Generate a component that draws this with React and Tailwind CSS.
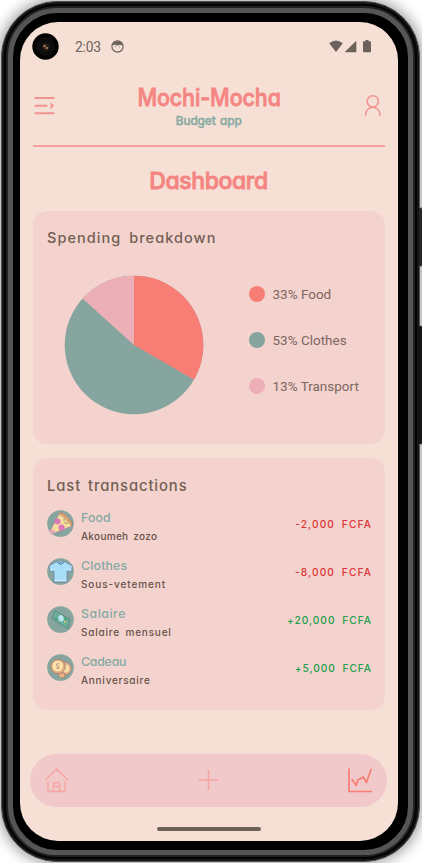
import React from "react";

const hand = "font-[Inter,sans-serif] [font-feature-settings:'cv11'] whitespace-nowrap";

function Camera() {
  return (
    <svg className="size-[27px]" viewBox="0 0 27 27">
      <circle cx="13.5" cy="13.5" r="13.2" fill="#020202" />
      <circle cx="13.5" cy="13.5" r="9.5" fill="#0d0d0d" />
      <circle cx="13.8" cy="13.8" r="3.6" fill="#2b1d17" />
      <circle cx="12.6" cy="13" r="1.3" fill="#a5745a" />
      <circle cx="14.8" cy="15" r="1" fill="#c69a78" />
    </svg>
  );
}

function StatusBar() {
  return (
    <div className="flex h-[52px] w-full pl-3 pt-[11px] text-[#6c615b]">
      <Camera />
      <span className="ml-4 mt-[5px] w-[28px] whitespace-nowrap font-[Roboto,sans-serif] text-[13.8px] leading-[18px] tracking-[-0.2px]">2:03</span>
      <svg className="ml-[8px] mt-[7px] size-[13px]" viewBox="0 0 13 13" fill="none" stroke="currentColor">
        <circle cx="6.5" cy="6.5" r="5.6" strokeWidth="1.2" />
        <path d="M1.8 4.9C2.6 .4 10.4 .4 11.2 4.9L8.8 4.5 6.5 5.3 4 4.5Z" fill="currentColor" strokeWidth=".6" />
        <path d="M4.1 6.9h.7M8.2 6.9h.7" strokeWidth="1" />
      </svg>
      <svg className="ml-[205px] mt-[7px] h-[13px] w-[43px]" viewBox="0 0 43 13" fill="currentColor">
        <path d="M.2 3.3Q7-2.4 13.8 3.3L7 12Z" />
        <path d="M16 12.2V11.8L27.3.7V12.2Z" />
        <path d="M36.5 0h3v1.2h1.6q.9 0 .9.9v9.2q0 .9-.9.9h-6.2q-.9 0-.9-.9V2.1q0-.9.9-.9h1.6Z" />
      </svg>
    </div>
  );
}

function Header() {
  return (
    <header className="mx-[13.4px] flex h-[72.5px] justify-between border-b-2 border-[#f5a09c]">
      <svg className="mt-[22px] h-[20px] w-[23px]" viewBox="0 0 23 20" fill="none" stroke="#f19490" strokeWidth="1.9" strokeLinecap="round">
        <path d="M2.4 2H20.6M2.4 9.7H13.6M2.4 17.3H20.6" />
        <path d="M18 7L20.9 9.7L18 12.6Z" fill="#f19490" strokeWidth=".6" />
      </svg>
      <div className={`${hand} flex w-[170px] flex-col items-center pr-[3px]`}>
        <h1 className="mt-[10px] scale-x-[0.895] text-[24px] font-medium leading-[28px] tracking-[-0.1px] text-[#f58583] [-webkit-text-stroke:0.8px_#f58583]">Mochi-Mocha</h1>
        <p className="mt-[1px] text-[11.8px] font-medium leading-[16px] tracking-[-0.1px] text-[#86aaa2] [-webkit-text-stroke:0.4px_#86aaa2] [word-spacing:1.5px]">Budget app</p>
      </div>
      <svg className="mr-[3.5px] mt-[20px] h-[23px] w-[17px]" viewBox="0 0 17 23" fill="none" stroke="#f19490" strokeWidth="1.5" strokeLinecap="round">
        <circle cx="8.8" cy="7.3" r="5.6" />
        <path d="M1.6 21.2C1.6 10.5 16 10.5 16 21.2" />
      </svg>
    </header>
  );
}

const legend = [
  ["bg-[#f77d75]", "33% Food"],
  ["bg-[#86a59e]", "53% Clothes"],
  ["bg-[#edafb7]", "13% Transport"],
];

function Breakdown() {
  return (
    <section className="mx-[13.4px] h-[233.5px] rounded-[14px] bg-[#f4d3cf] pl-[13.6px] pt-[16px]">
      <h3 className={`${hand} text-[14.5px] font-medium leading-[22px] tracking-[1.05px] text-[#725f53] [word-spacing:3px]`}>Spending breakdown</h3>
      <div className="flex">
        <svg className="ml-[17px] mt-[26px] size-[140px]" viewBox="-70 -70 140 140">
          <circle r="69.3" fill="#86a59e" />
          <path d="M0 0V-69.3A69.3 69.3 0 0 1 60 34.65Z" fill="#f77d75" />
          <path d="M0 0L-51.5-46.4A69.3 69.3 0 0 1 0-69.3Z" fill="#edafb7" />
        </svg>
        <div className="ml-[45.5px] mt-[37.5px] flex flex-col gap-[30px]">
          {legend.map(([color, label]) => (
            <div key={label} className="flex h-4 items-center gap-[7.5px]">
              <span className={`size-[15.5px] rounded-full ${color}`} />
              <span className="whitespace-nowrap font-[Roboto,sans-serif] text-[13.5px] leading-4 text-[#7c665f]">{label}</span>
            </div>
          ))}
        </div>
      </div>
    </section>
  );
}

function Pizza() {
  return (
    <g>
      <path d="M13 2Q20 3 25 13L25 16 5 24 3 21Z" fill="#f4df9c" stroke="#b17b9a" strokeWidth=".7" />
      <path d="M12.5 4Q15 0 25 12.5V16Q18 8 12.5 4Z" fill="#dda56b" stroke="#8d6969" strokeWidth=".5" />
      <circle cx="10.5" cy="11.5" r="3" fill="#df77bb" />
      <circle cx="14.5" cy="17.5" r="3" fill="#df77bb" />
      <path d="M3 21l3-1.5 2 1.5-1 2.5Z" fill="#ee9bc7" />
      <path d="M17 9.5v1M20 13v1M17.5 12.6q1 .5 1.5 0" stroke="#60515a" strokeWidth=".8" fill="none" />
      <path d="M15 5.5l1.5 1M19 8l1.5 1" stroke="#f7d59b" />
    </g>
  );
}

function Shirt() {
  return (
    <g>
      <path d="M9.5 3.5L2 8 3.2 14 7 13V24H20V13L24 14 25.5 8 17.5 3.5Q13.5 7 9.5 3.5Z" fill="#a9def9" stroke="#6d779d" strokeWidth=".7" />
      <path d="M9.5 3.5Q13.5 9 17.5 3.5" fill="#7cb8dc" stroke="#596f91" strokeWidth=".8" />
      <path d="M8 22.5h11" stroke="#fff" strokeWidth=".8" strokeDasharray="1 1" />
      <path d="M2.8 12l3.4-1M24.8 12L21 11M7.5 12v-2M19.8 12v-2" stroke="#cbedff" strokeWidth=".7" />
    </g>
  );
}

function Bill() {
  return (
    <g strokeLinejoin="round">
      <path d="M8 4.5L22.5 13 21 22.5 5 13Z" fill="#5eae95" stroke="#628079" strokeWidth=".8" />
      <path d="M9 6.5L21 14 19.7 20.3 7 12.5Z" fill="none" stroke="#8ccfb3" strokeWidth=".6" strokeDasharray="1.5 1" />
      <ellipse cx="14" cy="12.3" rx="2.6" ry="3.3" fill="#b9e5f0" transform="rotate(-20 14 12.3)" />
      <circle cx="18" cy="16" r="1" fill="#f2cc61" />
      <circle cx="9" cy="9.7" r=".8" fill="#d884ac" />
      <path d="M17.5 12l2 1.3M7.8 12.5l2.2 1.2" stroke="#356c62" strokeWidth=".8" />
    </g>
  );
}

function Coins() {
  return (
    <g stroke="#9c7570" strokeWidth=".7">
      <circle cx="18" cy="14.5" r="6.3" fill="#e9bd8b" />
      <circle cx="18.5" cy="14.5" r="4.5" fill="#f7dca6" stroke="#d5a077" />
      <path d="M11 19.5Q16 17 18 20Q19 24 15 24Q11 23 11 19.5Z" fill="#dea078" />
      <circle cx="11" cy="12.5" r="7.3" fill="#e5ae7f" />
      <circle cx="10.8" cy="12.1" r="5.8" fill="#ffe3a8" stroke="#d79f7b" />
      <path d="M12.6 10Q9.4 9 9.4 10.8T12.2 13Q12.4 15.3 9.2 14.3" fill="none" stroke="#97677a" />
      <path d="M12 20.8q2.5 1 5-.3M12.5 22.3q2 1 4.5 0" fill="none" stroke="#fac99d" />
    </g>
  );
}

const rows = [
  { icon: Pizza, name: "Food", nameCls: "tracking-[0.1px]", note: "Akoumeh zozo", noteCls: "tracking-[0.3px]", amount: "-2,000 FCFA", amountCls: "text-[#dc3535] tracking-[1.1px]" },
  { icon: Shirt, name: "Clothes", nameCls: "tracking-[0.2px]", note: "Sous-vetement", noteCls: "tracking-[0.9px]", amount: "-8,000 FCFA", amountCls: "text-[#dc3535] tracking-[1.1px]" },
  { icon: Bill, name: "Salaire", nameCls: "tracking-[0.55px]", note: "Salaire mensuel", noteCls: "tracking-[0.8px]", amount: "+20,000 FCFA", amountCls: "text-[#20a04b] tracking-[1px]" },
  { icon: Coins, name: "Cadeau", nameCls: "-tracking-[0.2px]", note: "Anniversaire", noteCls: "tracking-[0.75px]", amount: "+5,000 FCFA", amountCls: "text-[#20a04b] tracking-[0.95px]" },
];

function Transactions() {
  return (
    <section className="mx-[13.4px] mt-[14px] h-[252px] rounded-[14px] bg-[#f4d3cf] pl-[13.6px] pr-[12.6px] pt-[16.5px]">
      <h3 className={`${hand} text-[14.8px] font-medium leading-[22px] tracking-[0.9px] text-[#725f53] [word-spacing:2px]`}>Last transactions</h3>
      <div className="mt-[13px] flex flex-col">
        {rows.map(({ icon: Icon, ...r }) => (
          <div key={r.name} className={`${hand} flex h-[48px] items-start`}>
            <svg className="mt-[0.8px] size-[27px]" viewBox="0 0 27 27" fill="none">
              <circle cx="13.5" cy="13.5" r="13.3" fill="#86a59e" />
              <Icon />
            </svg>
            <div className="ml-[7px] flex-1">
              <p className={`text-[12.3px] font-medium leading-[16px] text-[#83aaa2] ${r.nameCls}`}>{r.name}</p>
              <p className={`mt-[3px] text-[10px] font-medium leading-[14px] text-[#665248] [word-spacing:2px] ${r.noteCls}`}>{r.note}</p>
            </div>
            <p className={`mt-[7px] text-[10.2px] font-medium leading-[15px] [word-spacing:3px] ${r.amountCls}`}>{r.amount}</p>
          </div>
        ))}
      </div>
    </section>
  );
}

function NavBar() {
  return (
    <nav className="ml-[10px] mt-[43.5px] flex h-[53.5px] w-[357px] items-center justify-between rounded-full bg-[#f2c9ca] pl-[14px] pr-[14px]">
      <svg className="size-[26px]" viewBox="0 0 26 26" fill="none" stroke="#f5a5a2" strokeWidth="1.5" strokeLinecap="round" strokeLinejoin="round">
        <path d="M1.8 12.5L12.5 2 23.5 12.5M4 15V24.5H21V15M9.5 24.5V17.5Q9.5 15.5 11.5 15.5H13.5Q15.5 15.5 15.5 17.5V24.5M9.5 19.5H15.5" />
      </svg>
      <svg className="size-[22px]" viewBox="0 0 22 22" fill="none" stroke="#f5a5a2" strokeWidth="1.5" strokeLinecap="round">
        <path d="M10.5 1.5V20.5M1 11H20" />
      </svg>
      <svg className="size-[26px]" viewBox="0 0 26 26" fill="none" stroke="#f77d75" strokeWidth="1.7" strokeLinecap="round" strokeLinejoin="round">
        <path d="M2 2V24.5H24.5M5 12.5L9.3 18.5 11 12.5Q13.5 12 16.3 10L19.5 15.5 24 2.5" />
      </svg>
    </nav>
  );
}

export default function App() {
  return (
    <div className="relative h-[863px] w-[422px] overflow-hidden bg-white">
      <div className="relative ml-[1px] h-[862px] w-[419px] pt-[1px]">
        <div className="h-[861px] rounded-[56px] border border-[#505351] bg-[#151716] p-[2px] shadow-[0_0_14px_2px_rgba(0,0,0,0.4)]">
          <div className="h-full rounded-[53px] border-2 border-[#030303] bg-[#202120] p-[2px]">
            <div className="h-full rounded-[49px] border-[5px] border-[#555555] bg-black pl-[7px] pr-[7px] pt-[9px]">
              <div className="h-[819px] w-[378px] overflow-hidden rounded-[38px] bg-[#f6e0d5]">
                <StatusBar />
                <Header />
                <h2 className={`${hand} flex h-[64px] items-center justify-center pr-[1px] pt-[5px] text-[23px] font-medium tracking-[-0.4px] text-[#f58583] [-webkit-text-stroke:0.8px_#f58583]`}>Dashboard</h2>
                <Breakdown />
                <Transactions />
                <NavBar />
                <div className="ml-[136.5px] mt-[20px] h-[4px] w-[104px] rounded-full bg-[#6b605a]" />
              </div>
            </div>
          </div>
        </div>
      </div>
      <div className="absolute right-0 top-[207px] h-[60px] w-[3px] rounded-r-[2px] border-y border-[#777] bg-[#252525]" />
      <div className="absolute right-0 top-[325px] h-[120px] w-[3px] rounded-r-[2px] border-y border-[#777] bg-[#161616]" />
    </div>
  );
}
